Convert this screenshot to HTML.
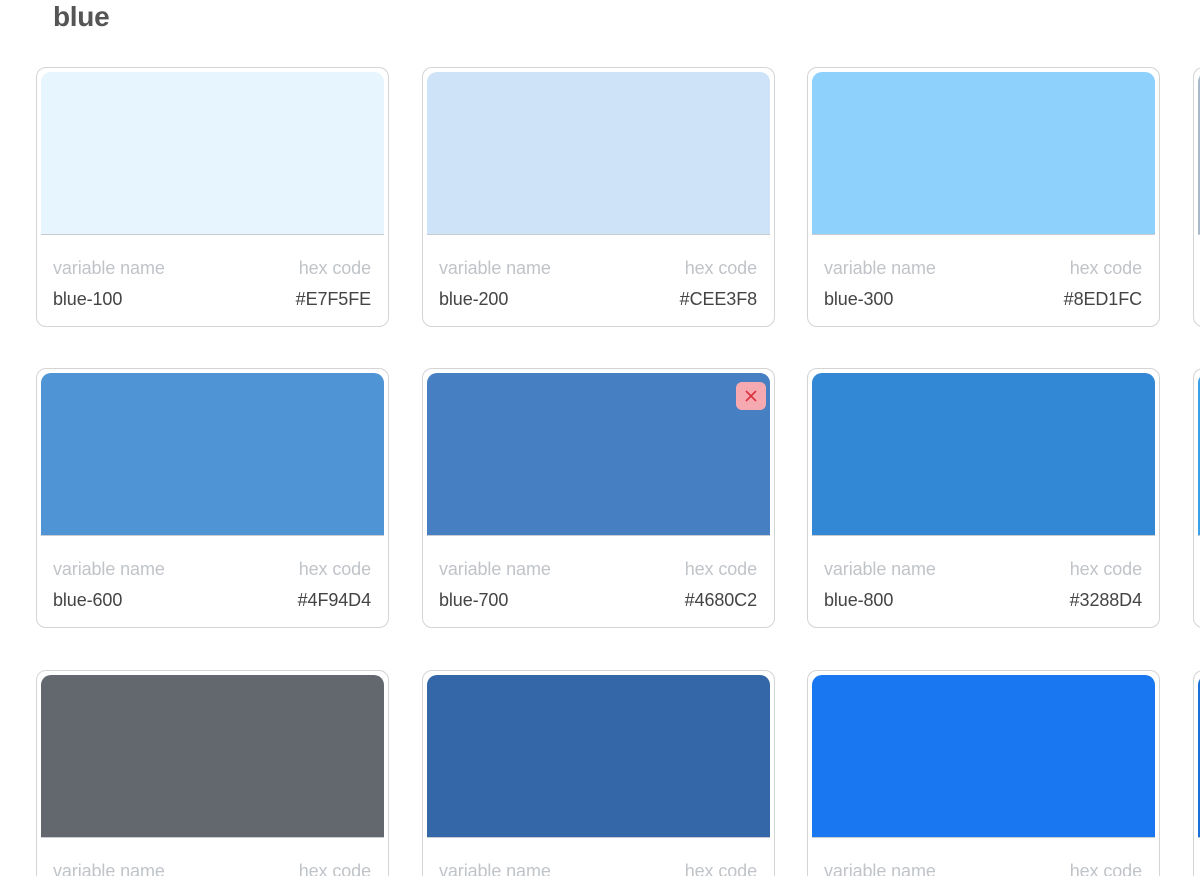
<!DOCTYPE html>
<html><head><meta charset="utf-8"><style>
*{margin:0;padding:0;box-sizing:border-box}
html,body{width:1200px;height:876px;overflow:hidden}
body{background:#fff;font-family:"Liberation Sans",sans-serif;position:relative}
h1{position:absolute;left:53px;top:1px;font-size:28px;font-weight:bold;color:#555;letter-spacing:-0.3px}
.card{position:absolute;width:353px;height:260px;border:1px solid #d4d4d4;border-radius:10px;background:#fff}
.sw{position:absolute;left:4px;top:4px;right:4px;height:163px;border-radius:10px 10px 0 0;border-bottom:1px solid #c8ccd0}
.l{position:absolute;top:190px;font-size:18px;color:#c0c4c8;letter-spacing:-0.1px}
.v{position:absolute;top:221px;font-size:18px;color:#444;letter-spacing:-0.1px}
.a{left:16px}.b{right:17px}
.x{position:absolute;right:4px;top:9px;width:30px;height:28px;border-radius:6px;background:#f7a9b1}
</style></head><body>
<h1>blue</h1>
<div class="card" style="left:36px;top:67px"><div class="sw" style="background:#E7F5FE"></div><div class="l a">variable name</div><div class="l b">hex code</div><div class="v a">blue-100</div><div class="v b">#E7F5FE</div></div>
<div class="card" style="left:422px;top:67px"><div class="sw" style="background:#CEE3F8"></div><div class="l a">variable name</div><div class="l b">hex code</div><div class="v a">blue-200</div><div class="v b">#CEE3F8</div></div>
<div class="card" style="left:807px;top:67px"><div class="sw" style="background:#8ED1FC"></div><div class="l a">variable name</div><div class="l b">hex code</div><div class="v a">blue-300</div><div class="v b">#8ED1FC</div></div>
<div class="card" style="left:1193px;top:67px"><div class="sw" style="background:#a9b9c9"></div></div>

<div class="card" style="left:36px;top:368px"><div class="sw" style="background:#4F94D4"></div><div class="l a">variable name</div><div class="l b">hex code</div><div class="v a">blue-600</div><div class="v b">#4F94D4</div></div>
<div class="card" style="left:422px;top:368px"><div class="sw" style="background:#4680C2"><div class="x"><svg width="30" height="28" viewBox="0 0 30 28"><path d="M10 9L20 19M20 9L10 19" stroke="#d9303e" stroke-width="1.6" fill="none"/></svg></div></div><div class="l a">variable name</div><div class="l b">hex code</div><div class="v a">blue-700</div><div class="v b">#4680C2</div></div>
<div class="card" style="left:807px;top:368px"><div class="sw" style="background:#3288D4"></div><div class="l a">variable name</div><div class="l b">hex code</div><div class="v a">blue-800</div><div class="v b">#3288D4</div></div>
<div class="card" style="left:1193px;top:368px"><div class="sw" style="background:#3aa0e8"></div></div>

<div class="card" style="left:36px;top:670px"><div class="sw" style="background:#63676E"></div><div class="l a">variable name</div><div class="l b">hex code</div></div>
<div class="card" style="left:422px;top:670px"><div class="sw" style="background:#3367A7"></div><div class="l a">variable name</div><div class="l b">hex code</div></div>
<div class="card" style="left:807px;top:670px"><div class="sw" style="background:#1A77F2"></div><div class="l a">variable name</div><div class="l b">hex code</div></div>
<div class="card" style="left:1193px;top:670px"><div class="sw" style="background:#1a6fd8"></div></div>
</body></html>
